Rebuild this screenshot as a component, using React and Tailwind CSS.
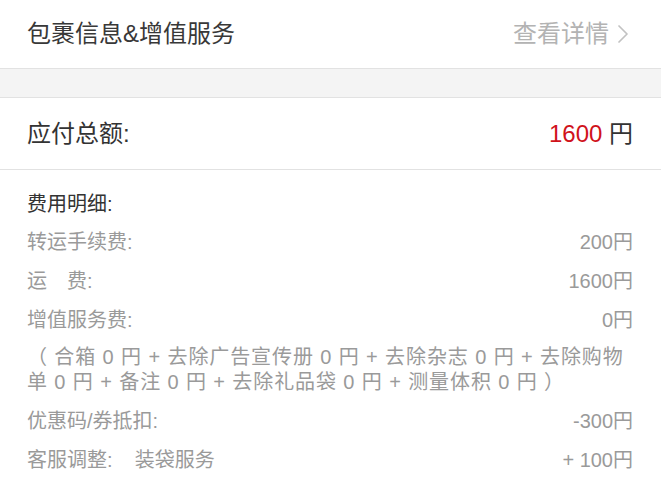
import { ChevronRight } from 'lucide-react';

const font = { fontFamily: '"Liberation Sans", "Noto Sans CJK SC", sans-serif' };

const rows = [
    { label: '转运手续费:', value: '200円' },
    { label: '运\u3000费:', value: '1600円' },
    { label: '增值服务费:', value: '0円' },
];

const tailRows = [
    { label: '优惠码/券抵扣:', value: '-300円' },
    { label: '客服调整:\u00a0\u00a0\u00a0\u00a0装袋服务', value: '+ 100円' },
];

const FeeRow = ({ label, value }) => (
    <div className="flex h-[39px] items-center justify-between text-[20px] text-[#9a9a9a]">
        <span className="whitespace-pre">{label}</span>
        <span>{value}</span>
    </div>
);

const App = () => {
    return (
        <div className="h-[500px] w-[661px] overflow-hidden bg-white" style={font}>
            <div className="flex h-[68px] items-center justify-between pl-[27px] pr-[22px]">
                <span className="text-[24px] text-[#383838]">包裹信息&amp;增值服务</span>
                <span className="flex items-center text-[24px] text-[#b3b3b3]">
                    查看详情
                    <ChevronRight className="ml-[-2px] h-[32px] w-[32px] text-[#c2c2c2]" strokeWidth={1.3} />
                </span>
            </div>

            <div className="h-[30px] border-y border-[#e2e2e2] bg-[#f4f4f4]" />

            <div className="flex h-[72px] items-center justify-between border-b border-[#e2e2e2] pl-[27px] pr-[28px]">
                <span className="text-[24px] text-[#333]">应付总额:</span>
                <span className="text-[24px] text-[#333]">
                    <span className="text-[#d0121b]">1600</span> 円
                </span>
            </div>

            <div className="pl-[27px] pr-[28px] pt-[16px]">
                <div className="flex h-[36px] items-center text-[20px] text-[#333]">费用明细:</div>
                {rows.map((r) => (
                    <FeeRow key={r.label} label={r.label} value={r.value} />
                ))}
                <p className="mt-[6px] whitespace-nowrap text-[20px] leading-[25px] tracking-[0.9px] text-[#9a9a9a]">
                    （ 合箱 0 円 + 去除广告宣传册 0 円 + 去除杂志 0 円 + 去除购物
                    <br />
                    单 0 円 + 备注 0 円 + 去除礼品袋 0 円 + 测量体积 0 円 ）
                </p>
                <div className="mt-[6px]">
                    {tailRows.map((r) => (
                        <FeeRow key={r.label} label={r.label} value={r.value} />
                    ))}
                </div>
            </div>
        </div>
    );
};

export default App;
